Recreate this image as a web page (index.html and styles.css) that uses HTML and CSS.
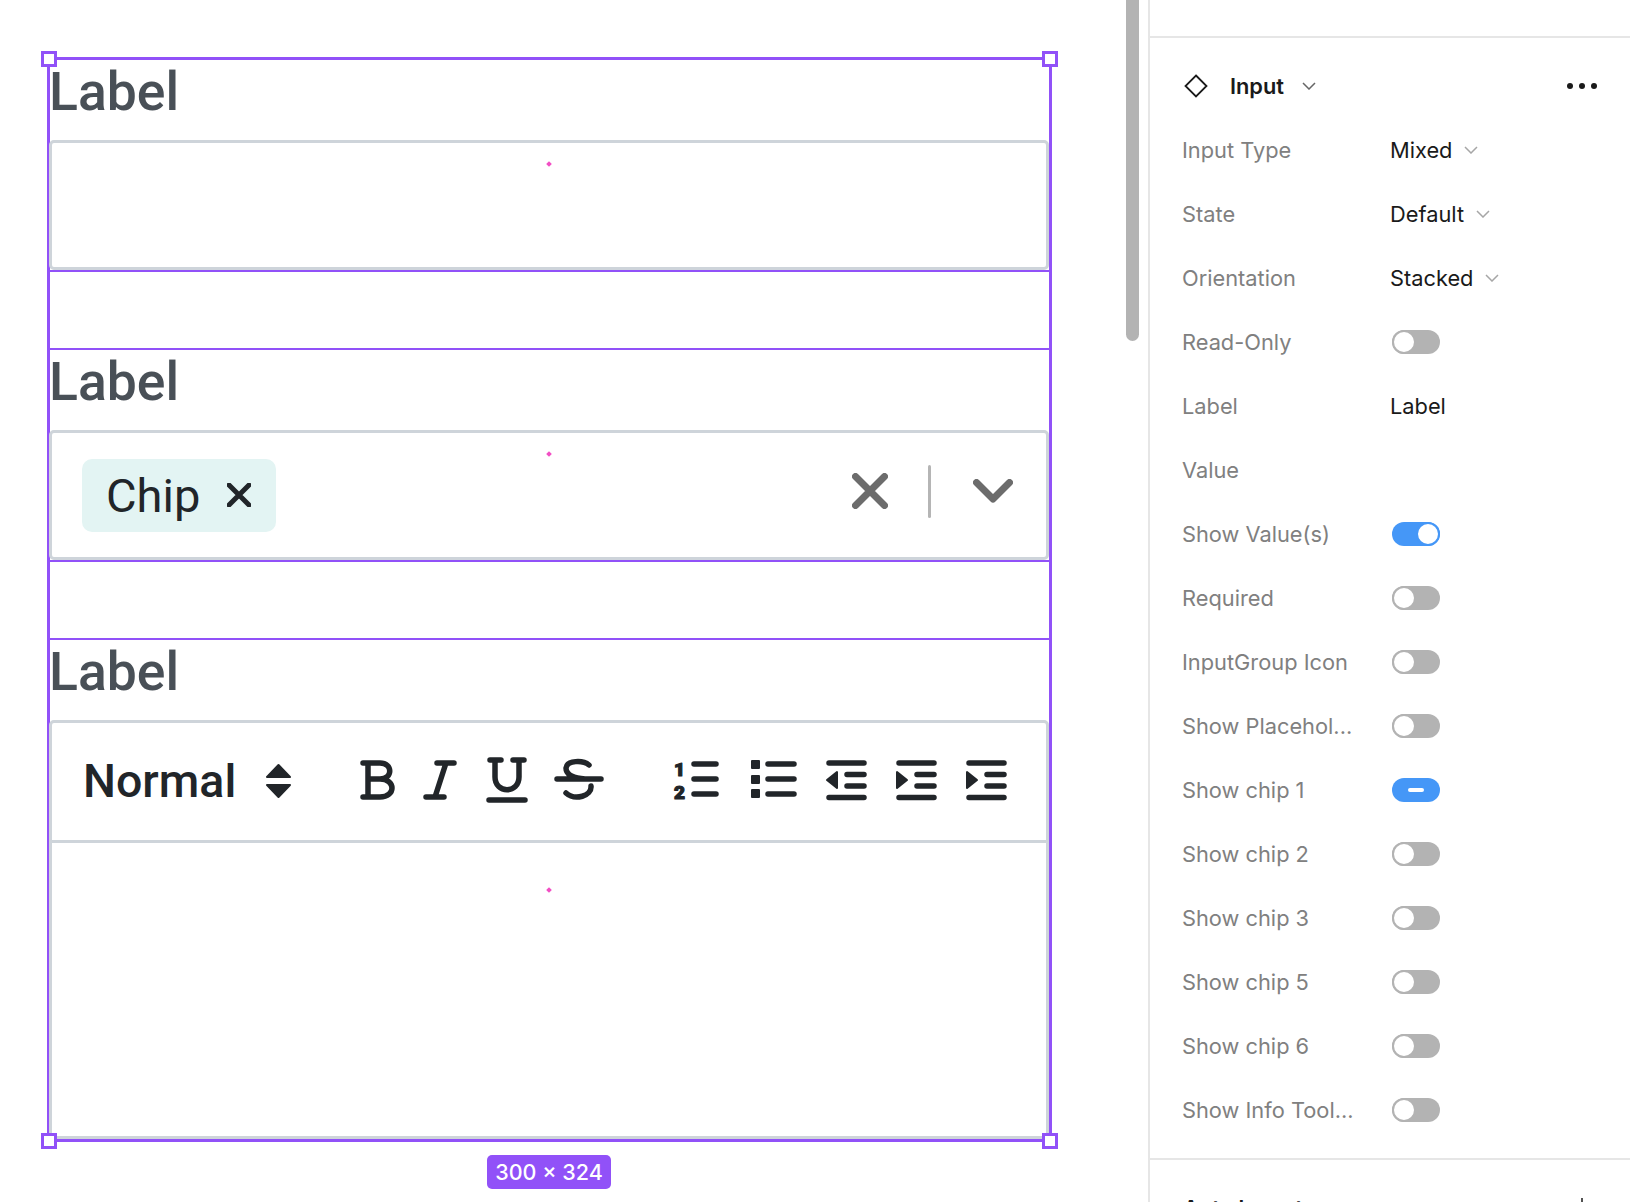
FILE: index.html
```html
<!DOCTYPE html>
<html lang="en">
<head>
  <meta charset="UTF-8">
  <title>Input component</title>
  <link rel="stylesheet" href="styles.css">
</head>
<body>
  <main class="canvas">
    <div class="scrollbar"></div>
    <div class="frame">
      <span class="handle tl"></span><span class="handle tr"></span>
      <span class="handle bl"></span><span class="handle br"></span>

      <section class="field field-first">
        <div class="field-label">Label</div>
        <div class="box box-plain"><span class="dot"></span></div>
      </section>

      <section class="field">
        <div class="field-label">Label</div>
        <div class="box box-select">
          <span class="dot"></span>
          <div class="chip">
            <span>Chip</span>
            <svg class="chip-x" viewBox="0 0 24 24"><path d="M2 2 22 22M22 2 2 22"/></svg>
          </div>
          <div class="select-icons">
            <svg class="clear-x" viewBox="0 0 36 36"><path d="M3.500 3.500 32.500 32.500M32.500 3.500 3.500 32.500"/></svg>
            <span class="select-sep"></span>
            <svg class="chevron" viewBox="0 0 40 24"><path d="M3.500 3.500 20 20 36.500 3.500"/></svg>
          </div>
        </div>
      </section>

      <section class="field field-editor">
        <div class="field-label">Label</div>
        <div class="box box-editor">
          <div class="toolbar">
            <span class="format">Normal</span>
            <svg class="tool sort" viewBox="0 0 27 36"><path d="M13.500 2 25 14H2ZM2 22H25L13.500 34Z"/></svg>
            <svg class="tool bold" viewBox="0 0 36 40"><path d="M3 3H20C33 3 33 19 20 19H8M20 19C36 19 36 37 20 37H3M8 3V37"/></svg>
            <svg class="tool italic" viewBox="0 0 34 40"><path d="M14 3H31M3 37H21M23 3 12 37"/></svg>
            <svg class="tool underline" viewBox="0 0 42 46"><path d="M4 3H15M27 3H38M9 3V20C9 37 33 37 33 20V3M3 43H39"/></svg>
            <svg class="tool strike" viewBox="0 0 48 40"><path d="M34 5C28 0 12 0 11 8 11 14 18 18 30 19M2 19H46M36 26C37 36 20 41 11 33"/></svg>
            <svg class="tool ordered" viewBox="0 0 46 40">
              <text class="list-num" x="0" y="16">1</text>
              <text class="list-num" x="0" y="39">2</text>
              <path d="M20 4H42M20 19H42M20 34H42"/>
            </svg>
            <svg class="tool bullets" viewBox="0 0 46 40">
              <path class="fill" d="M2 1H9V8H2ZM2 16H9V23H2ZM2 30H9V37H2Z"/>
              <path d="M18 4H44M18 19H44M18 34H44"/>
            </svg>
            <svg class="tool outdent" viewBox="0 0 42 40"><path class="fill" d="M2 20 12 12V28Z"/><path d="M4 3H39M22 14.500H39M22 26H39M4 37.500H39"/></svg>
            <svg class="tool indent" viewBox="0 0 42 40"><path class="fill" d="M12 20 2 12V28Z"/><path d="M4 3H39M22 14.500H39M22 26H39M4 37.500H39"/></svg>
            <svg class="tool indent" viewBox="0 0 42 40"><path class="fill" d="M12 20 2 12V28Z"/><path d="M4 3H39M22 14.500H39M22 26H39M4 37.500H39"/></svg>
          </div>
          <div class="editor-body"><span class="dot dot-editor"></span></div>
        </div>
      </section>

      <div class="size-badge">300 × 324</div>
    </div>
  </main>

  <aside class="panel">
    <div class="panel-top"><span class="top-cut">(x)</span></div>

    <div class="panel-section">
      <div class="comp-head">
        <svg class="diamond" viewBox="0 0 24 24"><path d="M12 1.500 22.500 12 12 22.500 1.500 12Z"/></svg>
        <span class="comp-name">Input</span>
        <svg class="caret caret-dark" viewBox="0 0 14 8"><path d="M1 1 7 7 13 1"/></svg>
        <span class="more"><i></i><i></i><i></i></span>
      </div>

      <div class="prop"><span class="prop-name">Input Type</span><span class="prop-value">Mixed <svg class="caret" viewBox="0 0 14 8"><path d="M1 1 7 7 13 1"/></svg></span></div>
      <div class="prop"><span class="prop-name">State</span><span class="prop-value">Default <svg class="caret" viewBox="0 0 14 8"><path d="M1 1 7 7 13 1"/></svg></span></div>
      <div class="prop"><span class="prop-name">Orientation</span><span class="prop-value">Stacked <svg class="caret" viewBox="0 0 14 8"><path d="M1 1 7 7 13 1"/></svg></span></div>
      <div class="prop"><span class="prop-name">Read-Only</span><span class="toggle"></span></div>
      <div class="prop"><span class="prop-name">Label</span><span class="prop-value">Label</span></div>
      <div class="prop"><span class="prop-name">Value</span></div>
      <div class="prop"><span class="prop-name">Show Value(s)</span><span class="toggle on"></span></div>
      <div class="prop"><span class="prop-name">Required</span><span class="toggle"></span></div>
      <div class="prop"><span class="prop-name">InputGroup Icon</span><span class="toggle"></span></div>
      <div class="prop"><span class="prop-name">Show Placehol...</span><span class="toggle"></span></div>
      <div class="prop"><span class="prop-name">Show chip 1</span><span class="toggle mixed"></span></div>
      <div class="prop"><span class="prop-name">Show chip 2</span><span class="toggle"></span></div>
      <div class="prop"><span class="prop-name">Show chip 3</span><span class="toggle"></span></div>
      <div class="prop"><span class="prop-name">Show chip 5</span><span class="toggle"></span></div>
      <div class="prop"><span class="prop-name">Show chip 6</span><span class="toggle"></span></div>
      <div class="prop"><span class="prop-name">Show Info Tool...</span><span class="toggle"></span></div>
    </div>

    <div class="panel-next">
      <span class="next-title">Auto layout</span>
      <svg class="plus" viewBox="0 0 20 20"><path d="M10 0V20M0 10H20"/></svg>
    </div>
  </aside>
</body>
</html>
```

FILE: styles.css
```css
*, *::after {
  box-sizing: border-box;
}

html, body {
  margin: 0;
  height: 1202px;
  overflow: hidden;
}

body {
  display: flex;
  background: #fff;
  font-family: 'Inter', sans-serif;
}

/* canvas */
.canvas {
  position: relative;
  width: 1148px;
  flex-shrink: 0;
  padding: 57px 0 0 47px;
}

.scrollbar {
  position: absolute;
  left: 1126px;
  top: -10px;
  width: 13px;
  height: 351px;
  border-radius: 7px;
  background: #b3b3b3;
}

.frame {
  position: relative;
  width: 1005px;
  height: 1085px;
  display: flex;
  flex-direction: column;
  gap: 76px;
  border-left: 3px solid #9151f8;
  border-right: 3px solid #9151f8;
}

.field {
  display: flex;
  flex-direction: column;
  border-top: 2px solid #9151f8;
  border-bottom: 2px solid #9151f8;
}

.field-first {
  border-top-width: 3px;
}

.field-editor {
  flex: 1;
  border-bottom-width: 3px;
}

.field-label {
  height: 80px;
  margin-left: -1px;
  font-family: 'Roboto', sans-serif;
  font-size: 53.500px;
  line-height: 64px;
  font-weight: 500;
  color: #495057;
}

.box {
  position: relative;
  margin: 0 0 0 -1px;
  height: 130px;
  border: 3px solid #ced4da;
  border-radius: 5px;
}

.box-select {
  display: flex;
  align-items: center;
  justify-content: space-between;
  padding: 0 33px 0 30px;
}

.box-editor {
  flex: 1;
  height: auto;
  display: flex;
  flex-direction: column;
}

.dot {
  position: absolute;
  left: 495px;
  top: 19px;
  width: 4px;
  height: 4px;
  background: #f24ec4;
  transform: rotate(45deg);
}

.dot-editor {
  top: 45px;
}

.chip {
  display: flex;
  align-items: center;
  gap: 27px;
  width: 194px;
  height: 73px;
  padding-left: 24px;
  border-radius: 10px;
  background: #e3f4f3;
  font-family: 'Roboto', sans-serif;
  font-size: 47px;
  color: #212529;
}

.chip-x {
  width: 24px;
  height: 24px;
  fill: none;
  stroke: #212529;
  stroke-width: 5;
  stroke-linecap: round;
}

.select-icons {
  display: flex;
  align-items: center;
  margin-top: -8px;
}

.clear-x {
  width: 36px;
  height: 36px;
  fill: none;
  stroke: #6c6c6c;
  stroke-width: 7;
  stroke-linecap: round;
}

.select-sep {
  width: 3px;
  height: 53px;
  margin: 0 42px 0 40px;
  border-radius: 2px;
  background: #b5b5b5;
}

.chevron {
  width: 40px;
  height: 24px;
  fill: none;
  stroke: #6c6c6c;
  stroke-width: 7;
  stroke-linecap: round;
  stroke-linejoin: round;
}

.toolbar {
  display: flex;
  align-items: center;
  height: 120px;
  padding: 0 0 2px 31px;
  border-bottom: 3px solid #ced4da;
}

.format {
  width: 182px;
  font-family: 'Roboto', sans-serif;
  font-size: 46.500px;
  font-weight: 500;
  color: #212529;
}

.tool {
  flex-shrink: 0;
  height: 40px;
  margin-top: -2px;
  overflow: visible;
  fill: none;
  stroke: #212529;
  stroke-width: 5.500;
  stroke-linecap: round;
  stroke-linejoin: round;
}

.tool .fill {
  fill: #212529;
  stroke-width: 2;
}

.sort {
  width: 27px;
  height: 36px;
  margin-top: 0;
  fill: #212529;
  stroke-width: 2;
}

.bold {
  width: 36px;
  margin-left: 68px;
}

.italic {
  width: 34px;
  margin-left: 27px;
}

.underline {
  width: 42px;
  height: 46px;
  margin-left: 29px;
}

.strike {
  width: 48px;
  margin-left: 27px;
}

.ordered {
  width: 46px;
  margin-left: 71px;
}

.bullets {
  width: 46px;
  margin-left: 30px;
}

.outdent {
  width: 42px;
  margin-left: 29px;
}

.indent {
  width: 42px;
  margin-left: 28px;
}

.list-num {
  font-family: 'Roboto', sans-serif;
  font-size: 19px;
  font-weight: 900;
  fill: #212529;
  stroke: #212529;
  stroke-width: 1.200;
}

.editor-body {
  position: relative;
  flex: 1;
}

.handle {
  position: absolute;
  z-index: 2;
  width: 16px;
  height: 16px;
  border: 3px solid #9151f8;
  background: #fff;
}

.tl { left: -9px; top: -6px; }
.tr { right: -9px; top: -6px; }
.bl { left: -9px; bottom: -7px; }
.br { right: -9px; bottom: -7px; }

.size-badge {
  position: absolute;
  left: 437px;
  top: 1098px;
  width: 124px;
  height: 34px;
  border-radius: 5px;
  background: #9151f8;
  color: #fff;
  font-size: 21.500px;
  font-weight: 500;
  line-height: 34px;
  text-align: center;
}

/* right panel */
.panel {
  flex: 1;
  border-left: 2px solid #e6e6e6;
  font-size: 21.800px;
}

.panel-top {
  height: 38px;
  padding-left: 33px;
  border-bottom: 2px solid #e6e6e6;
  overflow: hidden;
}

.top-cut {
  display: block;
  margin-top: -24px;
  color: #808080;
}

.panel-section {
  padding: 16px 0;
  border-bottom: 2px solid #e6e6e6;
}

.comp-head {
  display: flex;
  align-items: center;
  height: 64px;
  padding: 0 33px 0 34px;
}

.diamond {
  width: 24px;
  height: 24px;
  fill: none;
  stroke: #1a1a1a;
  stroke-width: 1.800;
}

.comp-name {
  margin-left: 22px;
  font-weight: 600;
  color: #1a1a1a;
}

.caret {
  width: 14px;
  height: 8px;
  margin-left: 9px;
  fill: none;
  stroke: #a6a6a6;
  stroke-width: 1.500;
}

.caret-dark {
  margin-left: 18px;
  stroke: #666;
}

.more {
  display: flex;
  gap: 6px;
  margin-left: auto;
}

.more i {
  width: 6px;
  height: 6px;
  border-radius: 50%;
  background: #1a1a1a;
}

.prop {
  display: flex;
  align-items: center;
  height: 64px;
  padding-left: 32px;
}

.prop-name {
  width: 208px;
  flex-shrink: 0;
  color: #808080;
}

.prop-value {
  display: flex;
  align-items: center;
  gap: 3px;
  color: #1a1a1a;
}

.toggle {
  position: relative;
  width: 48px;
  height: 24px;
  margin-left: 2px;
  border-radius: 12px;
  background: #b3b3b3;
}

.toggle::after {
  content: '';
  position: absolute;
  left: 0;
  top: 0;
  width: 24px;
  height: 24px;
  border: 2px solid #b3b3b3;
  border-radius: 50%;
  background: #fff;
}

.toggle.on {
  background: #4597f7;
}

.toggle.on::after {
  left: 24px;
  border-color: #4597f7;
}

.toggle.mixed {
  background: #4597f7;
}

.toggle.mixed::after {
  left: 16px;
  top: 10px;
  width: 16px;
  height: 4px;
  border: 0;
  border-radius: 2px;
}

.panel-next {
  display: flex;
  align-items: center;
  justify-content: space-between;
  padding: 35px 38px 0 33px;
}

.next-title {
  font-weight: 600;
  color: #1a1a1a;
}

.plus {
  width: 20px;
  height: 20px;
  fill: none;
  stroke: #1a1a1a;
  stroke-width: 1.500;
}
```
